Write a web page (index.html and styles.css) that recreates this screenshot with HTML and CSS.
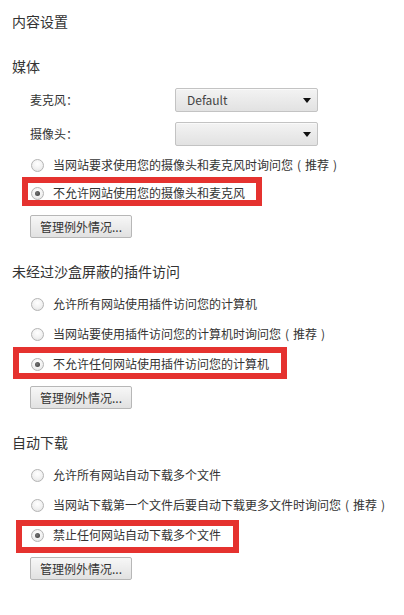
FILE: index.html
```html
<!DOCTYPE html>
<html lang="zh-CN">
<head>
<meta charset="utf-8">
<title>内容设置</title>
<link rel="stylesheet" href="styles.css">
</head>
<body>
<div class="page">
  <h1 class="page-title">内容设置</h1>

  <section class="section section-media">
    <h2 class="section-title">媒体</h2>
    <div class="section-body">
      <div class="field-row">
        <span class="field-label">麦克风：</span>
        <div class="select"><span class="select-text">Default</span><span class="select-arrow"></span></div>
      </div>
      <div class="field-row">
        <span class="field-label">摄像头：</span>
        <div class="select"><span class="select-text"></span><span class="select-arrow"></span></div>
      </div>
      <div class="radio-list radio-list-media">
        <label class="radio-row"><input type="radio" name="media" class="radio"><span>当网站要求使用您的摄像头和麦克风时询问您<span class="pn">(</span>推荐<span class="pn">)</span></span></label>
        <label class="radio-row marked mark-1"><input type="radio" name="media" class="radio" checked><span>不允许网站使用您的摄像头和麦克风</span></label>
      </div>
      <button class="btn">管理例外情况...</button>
    </div>
  </section>

  <section class="section">
    <h2 class="section-title">未经过沙盒屏蔽的插件访问</h2>
    <div class="section-body">
      <div class="radio-list">
        <label class="radio-row"><input type="radio" name="plugin" class="radio"><span>允许所有网站使用插件访问您的计算机</span></label>
        <label class="radio-row"><input type="radio" name="plugin" class="radio"><span>当网站要使用插件访问您的计算机时询问您<span class="pn">(</span>推荐<span class="pn">)</span></span></label>
        <label class="radio-row marked mark-2"><input type="radio" name="plugin" class="radio" checked><span>不允许任何网站使用插件访问您的计算机</span></label>
      </div>
      <button class="btn">管理例外情况...</button>
    </div>
  </section>

  <section class="section">
    <h2 class="section-title">自动下载</h2>
    <div class="section-body">
      <div class="radio-list">
        <label class="radio-row"><input type="radio" name="dl" class="radio"><span>允许所有网站自动下载多个文件</span></label>
        <label class="radio-row"><input type="radio" name="dl" class="radio"><span>当网站下载第一个文件后要自动下载更多文件时询问您<span class="pn">(</span>推荐<span class="pn">)</span></span></label>
        <label class="radio-row marked mark-3"><input type="radio" name="dl" class="radio" checked><span>禁止任何网站自动下载多个文件</span></label>
      </div>
      <button class="btn">管理例外情况...</button>
    </div>
  </section>
</div>
</body>
</html>
```

FILE: styles.css
```css
html, body {
  margin: 0;
  padding: 0;
  background: #ffffff;
}

body {
  font-family: "Noto Sans CJK SC", "Noto Sans", sans-serif;
  font-size: 12px;
  color: #333333;
}

.page {
  padding: 11px 0 0 12px;
}

.page-title {
  margin: 0;
  font-size: 14px;
  font-weight: normal;
  line-height: 20px;
  color: #333333;
}

.section {
  margin-top: 25px;
}

.section + .section {
  margin-top: 23px;
}

.section-title {
  margin: 0;
  font-size: 14px;
  font-weight: normal;
  line-height: 20px;
  color: #333333;
}

.section-body {
  padding-left: 18px;
  display: flex;
  flex-direction: column;
  align-items: flex-start;
}

.section-media .section-body {
  padding-top: 12px;
}

.field-row {
  display: flex;
  align-items: center;
  height: 24px;
  margin-bottom: 10px;
}

.field-label {
  width: 145px;
  line-height: 24px;
}

.select {
  box-sizing: border-box;
  width: 143px;
  height: 24px;
  border: 1px solid #c3c3c3;
  border-radius: 2px;
  background: linear-gradient(#f3f3f3, #e2e2e2);
  box-shadow: inset 0 1px 0 #fafafa;
  display: flex;
  align-items: center;
  justify-content: space-between;
  padding: 0 6px 0 11px;
}

.select-text {
  font-size: 12px;
  color: #444444;
  line-height: 22px;
}

.select-arrow {
  width: 0;
  height: 0;
  border-left: 4px solid transparent;
  border-right: 4px solid transparent;
  border-top: 5px solid #111111;
}

.radio-list {
  display: flex;
  flex-direction: column;
  margin-top: 8px;
  margin-bottom: 7px;
}

.radio-list.radio-list-media {
  margin-top: -6px;
}

.radio-row {
  position: relative;
  display: flex;
  align-items: center;
  height: 30px;
  line-height: 16px;
  color: #333333;
}

.radio-list-media .radio-row:first-child {
  height: 28px;
  padding-top: 2px;
  box-sizing: border-box;
}

.pn {
  padding: 0 4px;
}

.radio {
  -webkit-appearance: none;
  appearance: none;
  box-sizing: border-box;
  width: 13px;
  height: 13px;
  margin: 0 9px 0 1px;
  border: 1px solid #b4b4b4;
  border-radius: 50%;
  background: radial-gradient(circle at 50% 35%, #ffffff 0%, #f1f1f1 55%, #dcdcdc 100%);
  position: relative;
  flex: none;
}

.radio:checked::after {
  content: "";
  position: absolute;
  left: 3px;
  top: 3px;
  width: 5px;
  height: 5px;
  border-radius: 50%;
  background: radial-gradient(circle at 40% 40%, #777777, #333333);
}

.marked::after {
  content: "";
  position: absolute;
  box-sizing: border-box;
  border: 6px solid #e5322f;
  pointer-events: none;
}

.mark-1::after {
  left: -8px;
  top: -1px;
  width: 240px;
  height: 29px;
}

.mark-2::after {
  left: -17px;
  top: -2px;
  width: 274px;
  height: 32px;
}

.mark-3::after {
  left: -14px;
  top: 0;
  width: 223px;
  height: 33px;
}

.btn {
  box-sizing: border-box;
  height: 23px;
  padding: 0 9px;
  border: 1px solid #b7b7b7;
  border-radius: 2px;
  background: linear-gradient(#f7f7f7, #e1e1e1);
  font-family: "Noto Sans CJK SC", "Noto Sans", sans-serif;
  font-size: 12px;
  color: #333333;
  line-height: 21px;
  margin: 0;
}
```
